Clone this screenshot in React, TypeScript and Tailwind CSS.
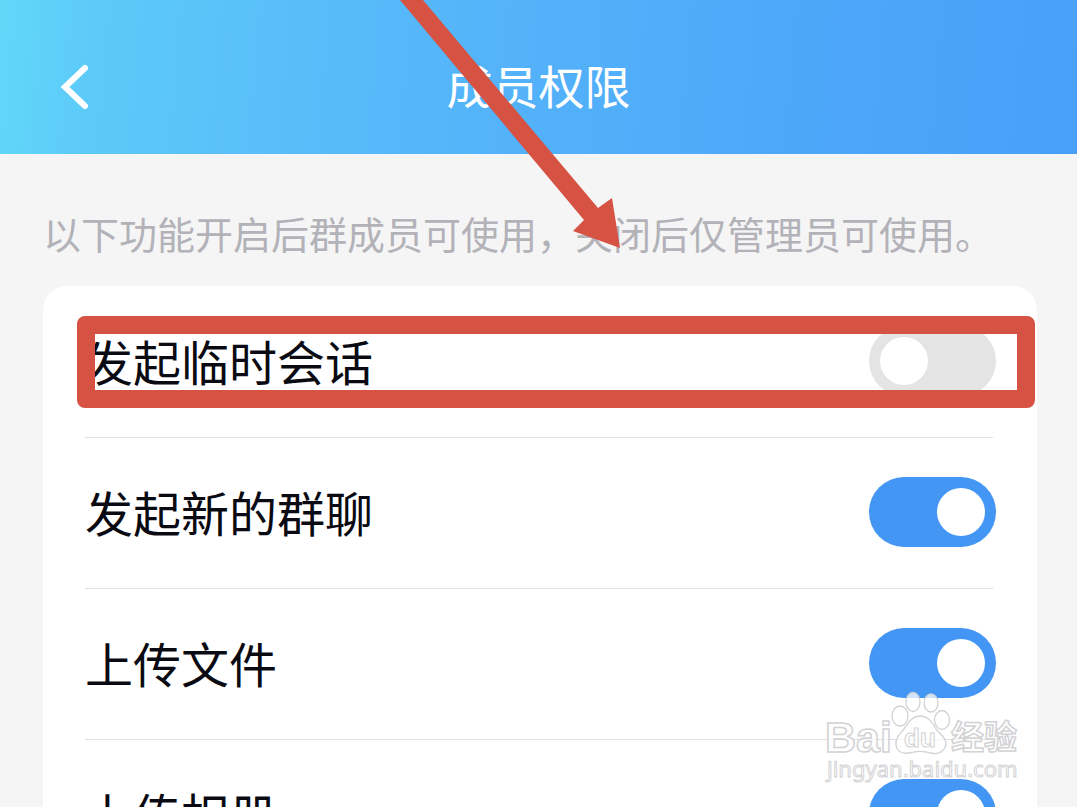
import React, { useState } from 'react';

interface Permission {
  id: string;
  label: string;
  enabled: boolean;
  highlighted?: boolean;
}

const initialPermissions: Permission[] = [
  { id: 'temp-chat', label: '发起临时会话', enabled: false, highlighted: true },
  { id: 'new-group', label: '发起新的群聊', enabled: true },
  { id: 'upload-file', label: '上传文件', enabled: true },
  { id: 'upload-album', label: '上传相册', enabled: true },
];

interface RowProps {
  item: Permission;
  onToggle: (id: string) => void;
}

const PermissionRow: React.FC<RowProps> = ({ item, onToggle }) => (
  <li className="relative">
    <div className="flex h-[150px] items-center justify-between pb-0.5 pl-[42px] pr-[41px]">
      <label htmlFor={item.id} className="pb-[3px] text-[48px] leading-[72px] text-[#0a0a12]">
        {item.label}
      </label>
      <input
        id={item.id}
        type="checkbox"
        checked={item.enabled}
        onChange={() => onToggle(item.id)}
        className="flex h-[70px] w-[127px] shrink-0 cursor-pointer appearance-none items-center justify-start rounded-full bg-[#e4e4e4] px-[11px] before:size-12 before:rounded-full before:bg-white before:content-[''] checked:justify-end checked:bg-[#4496f4]"
      />
    </div>
    <hr className="ml-[42px] mr-[44px] border-t border-[#e0e0e2]" />
    {item.highlighted && (
      <div className="pointer-events-none absolute left-[34px] right-0.5 top-[29px] h-[92px] rounded-lg border-[18px] border-[#d65243]" />
    )}
  </li>
);

const Arrow = () => (
  <svg className="pointer-events-none absolute left-[400px] top-0" width="224" height="250" viewBox="0 0 224 250" aria-hidden="true">
    <path d="M0 0H23L198 208L212 198L220 248L173 231L184 220Z" fill="#d65243" />
  </svg>
);

const Watermark = () => (
  <svg
    className="pointer-events-none absolute bottom-5 right-[53px]"
    width="204"
    height="100"
    viewBox="820 687 204 100"
    fill="#ffffff"
    fillOpacity="0.75"
    stroke="#d2d2d4"
    strokeWidth="1"
    fontFamily="'Liberation Sans', 'Noto Sans CJK SC', sans-serif"
  >
    <text x="825" y="752" fontSize="43" fontWeight="700" strokeWidth="1.5">Bai</text>
    <g strokeWidth="1.3">
      <ellipse cx="900" cy="716" rx="8" ry="10" />
      <ellipse cx="913" cy="702" rx="7" ry="9.5" />
      <ellipse cx="931" cy="703" rx="7" ry="9" />
      <ellipse cx="942" cy="720" rx="7.5" ry="9.5" />
      <path d="M920 716C912 716 908 723 904 729C900 734 895 738 896 745C897 752 903 754 909 753C916 751 924 751 931 753C939 755 945 751 946 744C946 737 940 734 936 729C932 722 928 716 920 716Z" />
    </g>
    <text x="904" y="747" fontSize="26" fontWeight="700">du</text>
    <text x="951" y="749" fontSize="33" fontWeight="700" strokeWidth="1.5">经验</text>
    <text x="827" y="777" fontSize="22" fontFamily="'Noto Sans', sans-serif">jingyan.baidu.com</text>
  </svg>
);

const App: React.FC = () => {
  const [permissions, setPermissions] = useState(initialPermissions);

  const handleToggle = (id: string) => {
    setPermissions(prev => prev.map(p => (p.id === id ? { ...p, enabled: !p.enabled } : p)));
  };

  return (
    <div className="relative h-screen overflow-hidden bg-[#f5f5f5] font-['Noto_Sans_CJK_SC',sans-serif]">
      <header className="grid h-[154px] grid-cols-[1fr_auto_1fr] items-center bg-[linear-gradient(95deg,#62d8f9_0%,#5ccaf8_9%,#58bdf9_28%,#53b1f9_50%,#4da7f9_75%,#49a0f8_100%)] px-[58px] pt-5 text-white">
        <button type="button" aria-label="返回" className="justify-self-start">
          <svg width="32" height="48" viewBox="0 0 32 48" fill="none" stroke="currentColor" strokeWidth="6" strokeLinecap="round">
            <path d="M27 5L7 24L27 43" />
          </svg>
        </button>
        <h1 className="pb-1.5 text-[46px] leading-[68px]">成员权限</h1>
      </header>

      <main className="pl-[43px] pr-10">
        <p className="whitespace-nowrap pb-[25px] pt-[51px] text-[38px] leading-[56px] text-[#b2b2b8]">
          以下功能开启后群成员可使用，关闭后仅管理员可使用。
        </p>
        <ul className="rounded-3xl bg-white pt-px">
          {permissions.map(item => (
            <PermissionRow key={item.id} item={item} onToggle={handleToggle} />
          ))}
        </ul>
      </main>

      <Arrow />
      <Watermark />
    </div>
  );
};

export default App;
